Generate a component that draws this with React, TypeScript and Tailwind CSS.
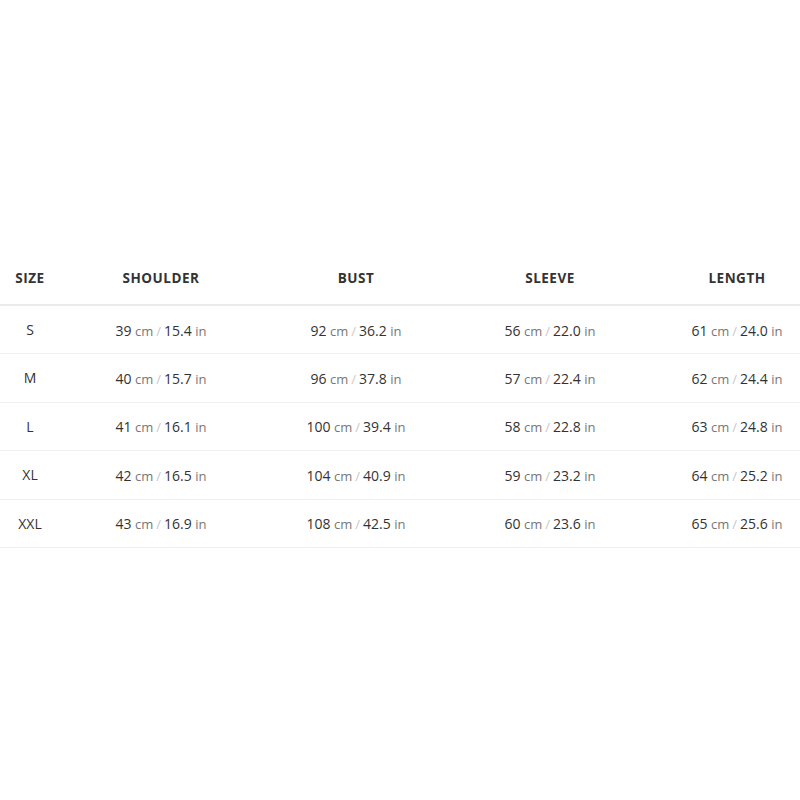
const rows = [
  { size: 'S', v: [[39, 15.4], [92, 36.2], [56, '22.0'], [61, '24.0']] },
  { size: 'M', v: [[40, 15.7], [96, 37.8], [57, 22.4], [62, 24.4]] },
  { size: 'L', v: [[41, 16.1], [100, 39.4], [58, 22.8], [63, 24.8]] },
  { size: 'XL', v: [[42, 16.5], [104, 40.9], [59, 23.2], [64, 25.2]] },
  { size: 'XXL', v: [[43, 16.9], [108, 42.5], [60, 23.6], [65, 25.6]] },
];

function Value({ cm, inch }: { cm: number | string; inch: number | string }) {
  return (
    <span className="whitespace-nowrap">
      <span className="text-[14px] text-[#333]">{cm}</span>
      <span className="text-[13px] text-[#777]"> cm</span>
      <span className="text-[13px] text-[#c8c8c8] mx-[3px]">/</span>
      <span className="text-[14px] text-[#333]">{inch}</span>
      <span className="text-[13px] text-[#777]"> in</span>
    </span>
  );
}

export default function App() {
  return (
    <div className="min-h-[800px] w-[800px] overflow-hidden bg-white pt-[250px] font-['Open_Sans',sans-serif]">
      <table className="w-[824px] border-collapse table-fixed">
        <colgroup>
          <col className="w-[60px]" />
          <col className="w-[202px]" />
          <col className="w-[188px]" />
          <col className="w-[200px]" />
          <col className="w-[174px]" />
        </colgroup>
        <thead>
          <tr className="h-[55px] border-b-2 border-[#ebebeb]">
            {['SIZE', 'SHOULDER', 'BUST', 'SLEEVE', 'LENGTH'].map((h) => (
              <th key={h} className="pt-[2px] text-center text-[13.5px] font-bold tracking-[0.5px] text-[#333]">
                {h}
              </th>
            ))}
          </tr>
        </thead>
        <tbody>
          {rows.map((r) => (
            <tr key={r.size} className="h-[48.5px] border-b border-[#f0f0f0]">
              <td className="text-center text-[14px] text-[#333]">{r.size}</td>
              {r.v.map((x, i) => (
                <td key={i} className="text-center">
                  <Value cm={x[0]} inch={x[1]} />
                </td>
              ))}
            </tr>
          ))}
        </tbody>
      </table>
    </div>
  );
}
